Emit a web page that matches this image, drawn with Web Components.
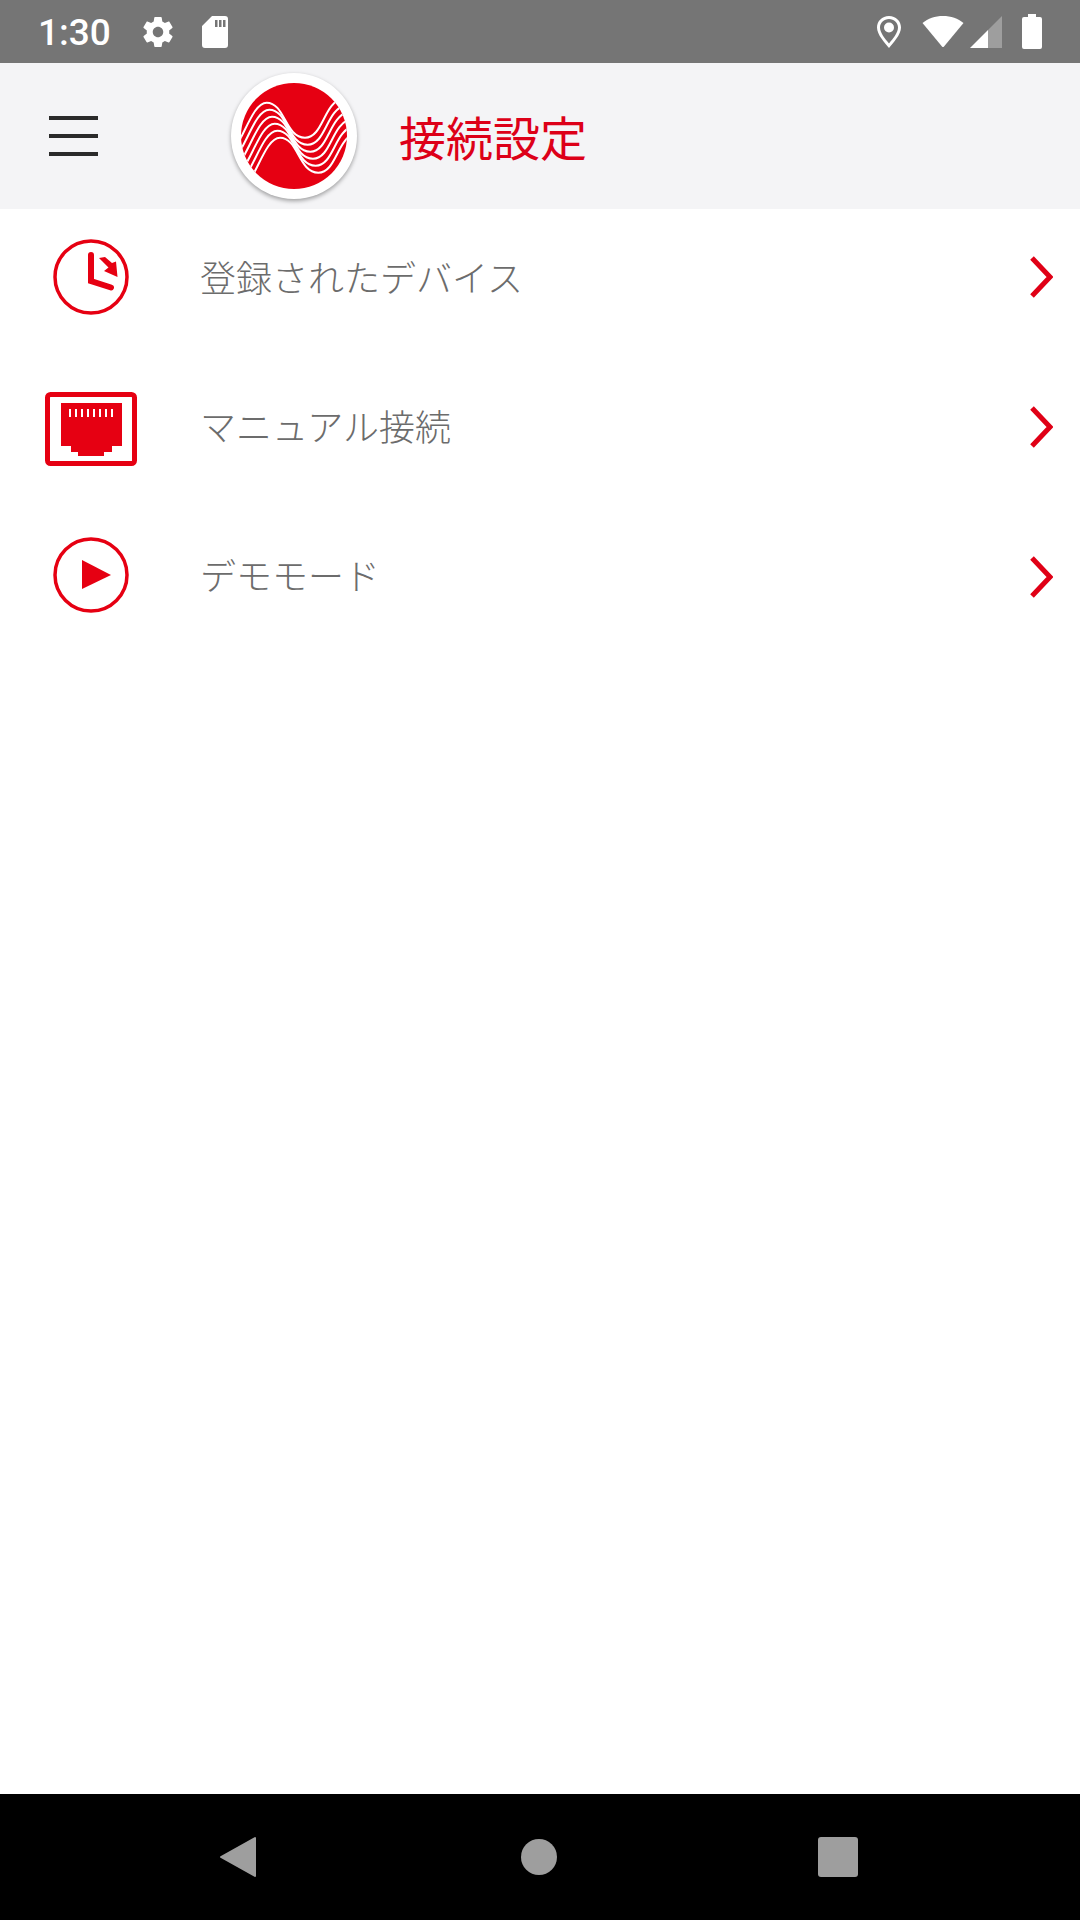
<!DOCTYPE html>
<html lang="ja">
<head>
<meta charset="utf-8">
<title>接続設定</title>
<style>
  html, body { margin: 0; padding: 0; background: #fff; }
  body { width: 1080px; height: 1920px; font-family: "Noto Sans CJK JP", Roboto, sans-serif; }
  #app { display: flex; flex-direction: column; height: 1920px; }
  menu-list { flex: 1; }
</style>
</head>
<body>
<div id="app">
  <status-bar time="1:30"></status-bar>
  <app-toolbar>接続設定</app-toolbar>
  <menu-list>
    <menu-row>
      <svg slot="icon" width="92" height="92" viewBox="0 0 92 92">
        <circle cx="46" cy="46" r="36" fill="none" stroke="#e60012" stroke-width="3.5"/>
        <path d="M46 24 V50 L66 56.5" fill="none" stroke="#e60012" stroke-width="6" stroke-linecap="round"/>
        <path d="M54 27 L60 26 L67 32 L71 30.5 L72.5 46 L59 40 L63.5 36.5 Z" fill="#e60012"/>
      </svg>
      登録されたデバイス
    </menu-row>
    <menu-row style="--chevron-shift: 2px">
      <svg slot="icon" style="margin-top:6px" width="92" height="74" viewBox="0 0 92 74">
        <rect x="2.5" y="2.5" width="87" height="69" rx="3" fill="none" stroke="#e60012" stroke-width="5"/>
        <path d="M16 11 H77 V54 H67 V60 H59 V64 H33 V60 H26 V54 H16 Z" fill="#e60012"/>
        <path d="M25 17 v8 M31 17 v8 M37 17 v8 M43 17 v8 M49 17 v8 M55 17 v8 M61 17 v8 M67 17 v8" stroke="#fff" stroke-width="2"/>
      </svg>
      マニュアル接続
    </menu-row>
    <menu-row style="--chevron-shift: 4px">
      <svg slot="icon" width="92" height="92" viewBox="0 0 92 92">
        <circle cx="46" cy="46" r="36" fill="none" stroke="#e60012" stroke-width="3.5"/>
        <path d="M37 31 L66 46 L37 60 Z" fill="#e60012"/>
      </svg>
      デモモード
    </menu-row>
  </menu-list>
  <nav-bar></nav-bar>
</div>

<script>
'use strict';

(function() {
  // small helper so every element gets an open shadow root from a string
  class ShadowElement extends HTMLElement {
    constructor() {
      super()
      this.attachShadow({ mode: 'open' }).innerHTML = this.markup()
    }
  }

  class StatusBar extends ShadowElement {
    markup() {
      return `
        <style>
          :host {
            display: flex;
            align-items: center;
            flex: none;
            height: 63px;
            background: #757575;
            color: #fff;
            padding: 0 38px 0 38px;
            box-sizing: border-box;
          }
          .time { font: 500 37px Roboto, sans-serif; width: 102px; margin-top: 2px; }
          .left, .right { display: flex; align-items: center; }
          .right { margin-left: auto; }
          svg { display: block; }
        </style>
        <div class="left">
          <span class="time">${this.getAttribute('time') || ''}</span>
          <svg width="36" height="36" viewBox="0 0 24 24" fill="#fff"><path d="M19.43 12.98c.04-.32.07-.64.07-.98s-.03-.66-.07-.98l2.11-1.65c.19-.15.24-.42.12-.64l-2-3.46c-.12-.22-.39-.3-.61-.22l-2.49 1c-.52-.4-1.08-.73-1.69-.98l-.38-2.65C14.46 2.18 14.25 2 14 2h-4c-.25 0-.46.18-.49.42l-.38 2.65c-.61.25-1.17.59-1.69.98l-2.49-1c-.23-.09-.49 0-.61.22l-2 3.46c-.13.22-.07.49.12.64l2.11 1.65c-.04.32-.07.65-.07.98s.03.66.07.98l-2.11 1.65c-.19.15-.24.42-.12.64l2 3.46c.12.22.39.3.61.22l2.49-1c.52.4 1.08.73 1.69.98l.38 2.65c.03.24.24.42.49.42h4c.25 0 .46-.18.49-.42l.38-2.65c.61-.25 1.17-.59 1.69-.98l2.49 1c.23.09.49 0 .61-.22l2-3.46c.12-.22.07-.49-.12-.64l-2.11-1.65zM12 15.5c-1.93 0-3.5-1.57-3.5-3.5s1.57-3.5 3.5-3.5 3.5 1.57 3.5 3.5-1.57 3.5-3.5 3.5z"/></svg>
          <svg style="margin-left:25px" width="28" height="34" viewBox="0 0 28 34"><path fill="#fff" fill-rule="evenodd" d="M11 1 H24 a3 3 0 0 1 3 3 V30 a3 3 0 0 1 -3 3 H4 a3 3 0 0 1 -3 -3 V11 Z M14 5 v7 h2.5 v-7 Z M18 5 v7 h2.5 v-7 Z M22 5 v7 h2.5 v-7 Z"/></svg>
        </div>
        <div class="right">
          <svg width="26" height="34" viewBox="0 0 26 34"><path fill="#fff" fill-rule="evenodd" d="M13 1 C6 1 1 6.2 1 12.6 C1 20 9 28 13 33 C17 28 25 20 25 12.6 C25 6.2 20 1 13 1 Z M13 4 C18 4 22 7.8 22 12.6 C22 17.6 17 24 13 28.4 C9 24 4 17.6 4 12.6 C4 7.8 8 4 13 4 Z"/><circle cx="13" cy="12.5" r="5" fill="#fff"/></svg>
          <svg style="margin-left:20px" width="42" height="32" viewBox="0 0 42 32"><path fill="#fff" d="M21 0 C29 0 36 2.6 41.5 7 L22 30.5 a1.3 1.3 0 0 1 -2 0 L0.5 7 C6 2.6 13 0 21 0 Z"/></svg>
          <svg style="margin-left:6px" width="32" height="32" viewBox="0 0 32 32"><path fill="#fff" d="M0 32 L18 14 V32 Z"/><path fill="#fff" fill-opacity=".3" d="M18 14 L32 0 V32 H18 Z"/></svg>
          <svg style="margin-left:20px" width="20" height="35" viewBox="0 0 20 35"><path fill="#fff" d="M6 0 H14 V3 H18 a2 2 0 0 1 2 2 V33 a2 2 0 0 1 -2 2 H2 a2 2 0 0 1 -2 -2 V5 a2 2 0 0 1 2 -2 H6 Z"/></svg>
        </div>
      `
    }
  }

  class AppLogo extends ShadowElement {
    markup() {
      // coordinates are in 3x of the real pixels, that made reading them easier
      const wave = 'M50 300 C100 250 125 130 170 130 C225 130 225 235 285 235 C340 235 340 130 400 115'
      const lines = [0, 1, 2, 3, 4, 5].map(i =>
        `<path d="${wave}" transform="translate(${i * 8} ${i * 21})"/>`).join('')
      return `
        <style>
          :host { display: block; width: 126px; height: 126px; border-radius: 50%; background: #fff;
                  box-shadow: 0 2px 4px rgba(0,0,0,.35); }
          svg { display: block; }
        </style>
        <svg width="126" height="126" viewBox="63 41 378 378">
          <defs><clipPath id="disc"><circle cx="252" cy="230" r="159"/></clipPath></defs>
          <circle cx="252" cy="230" r="159" fill="#e60012"/>
          <g clip-path="url(#disc)" fill="none" stroke="#fff" stroke-width="6">${lines}</g>
        </svg>
      `
    }
  }

  class AppToolbar extends ShadowElement {
    markup() {
      return `
        <style>
          :host {
            display: flex;
            align-items: center;
            flex: none;
            height: 146px;
            background: #f4f4f6;
            box-sizing: border-box;
            padding-left: 49px;
          }
          .menu { display: flex; flex-direction: column; gap: 14px; width: 49px; }
          .menu i { display: block; height: 4px; background: #2a2a2a; }
          app-logo { margin-left: 133px; }
          .title {
            margin: 0 0 2px 42px;
            color: #dd0018;
            font: 400 47px "Noto Sans CJK JP", sans-serif;
          }
        </style>
        <div class="menu"><i></i><i></i><i></i></div>
        <app-logo></app-logo>
        <span class="title"><slot></slot></span>
      `
    }
  }

  class MenuList extends ShadowElement {
    markup() {
      return `
        <style>
          :host { display: flex; flex-direction: column; gap: 13px; }
        </style>
        <slot></slot>
      `
    }
  }

  class MenuRow extends ShadowElement {
    markup() {
      return `
        <style>
          :host {
            display: grid;
            grid-template-columns: 92px 1fr 24px;
            align-items: center;
            height: 136px;
            padding: 0 27px 0 45px;
            color: #6c6c6c;
            font: 300 36px "Noto Sans CJK JP", sans-serif;
          }
          .icon { display: flex; }
          .label { padding: 0 0 2px 63px; }
          svg { display: block; }
          .chevron { margin-top: var(--chevron-shift, 0px); }
        </style>
        <div class="icon"><slot name="icon"></slot></div>
        <div class="label"><slot></slot></div>
        <svg class="chevron" width="24" height="44" viewBox="0 0 24 44">
          <path d="M3 3 L21 22 L3 41" fill="none" stroke="#e00016" stroke-width="5"/>
        </svg>
      `
    }
  }

  class NavBar extends ShadowElement {
    markup() {
      return `
        <style>
          :host {
            display: flex;
            align-items: center;
            flex: none;
            height: 126px;
            padding-left: 219px;
            background: #000;
          }
          svg { display: block; }
          .home { width: 36px; height: 36px; border-radius: 50%; background: #9e9e9e; margin-left: 264px; }
          .recent { width: 40px; height: 40px; border-radius: 3px; background: #9e9e9e; margin-left: 261px; }
        </style>
        <svg width="38" height="42" viewBox="0 0 38 42"><path fill="#9e9e9e" stroke="#9e9e9e" stroke-width="2" stroke-linejoin="round" d="M36 2 V40 L2 21 Z"/></svg>
        <div class="home"></div>
        <div class="recent"></div>
      `
    }
  }

  customElements.define('status-bar', StatusBar)
  customElements.define('app-logo', AppLogo)
  customElements.define('app-toolbar', AppToolbar)
  customElements.define('menu-list', MenuList)
  customElements.define('menu-row', MenuRow)
  customElements.define('nav-bar', NavBar)
})()
</script>
</body>
</html>
